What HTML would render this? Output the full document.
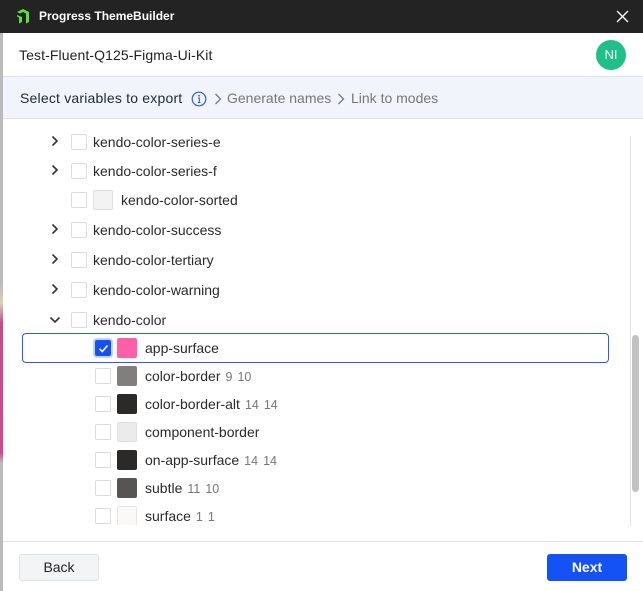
<!DOCTYPE html>
<html><head><meta charset="utf-8"><style>
*{box-sizing:border-box;margin:0;padding:0}
body{width:643px;height:591px;overflow:hidden;background:#fff;font-family:"Liberation Sans",Arial,sans-serif;position:relative;color:#222}
.edge{position:absolute;left:0;top:33px;width:3px;height:558px;background:linear-gradient(#bbb 0,#bbb 250px,#d9d0b8 270px,#c84b86 290px,#d04a8a 420px,#bbb 430px)}
.tb{position:absolute;left:0;top:0;width:643px;height:33px;background:#232323;color:#fff;font-size:12px;font-weight:bold}
.tb .t{position:absolute;left:39px;top:9px}
.hd{position:absolute;left:3px;top:33px;width:640px;height:43px;background:#fff}
.hd .t{position:absolute;left:16px;top:14px;font-size:14px;color:#222;letter-spacing:0.1px}
.av{position:absolute;left:593px;top:7px;width:30px;height:30px;border-radius:50%;background:#1fbf8a;color:#fff;font-size:13px;text-align:center;line-height:30px}
.st{position:absolute;left:3px;top:76px;width:640px;height:43px;background:#f1f4fb;border-top:1px solid #dde3ee;border-bottom:1px solid #dde3ee;font-size:14px}
.st span{position:absolute;top:13px}
.row{position:absolute;left:0;height:20px;font-size:14px;color:#2a2a2a}
.cb{position:absolute;width:16px;height:16px;border:1px solid #dcdcdc;border-radius:2px;background:#fff}
.sw{position:absolute;width:20px;height:20px;border-radius:2px}
.tx{position:absolute;top:2px;white-space:nowrap}
.n{color:#777;font-size:12.5px;margin-left:5px}
.chev{position:absolute;top:3px}
.sel{position:absolute;left:22px;top:333px;width:587px;height:30px;border:1px solid #2a5ce6;border-radius:4px}
.sb{position:absolute;left:630px;top:136px;width:13px;height:390px;background:#fff;border-left:1px solid #e5e5e5}
.th{position:absolute;left:632px;top:335px;width:7px;height:157px;background:#c1c1c1;border-radius:4px}
.ft{position:absolute;left:3px;top:541px;width:640px;height:50px;border-top:1px solid #e3e3e3}
.bk{position:absolute;left:19px;top:554px;width:80px;height:27px;background:#f2f4f5;border:1px solid #dde2e5;border-radius:3px;text-align:center;line-height:25px;font-size:14px}
.nx{position:absolute;left:547px;top:554px;width:80px;height:27px;background:#1452f5;border-radius:3px;color:#fff;text-align:center;line-height:27px;font-size:14px;font-weight:bold}
</style></head><body>
<div class="tb">
<svg style="position:absolute;left:14px;top:7px" width="18" height="18" viewBox="0 0 18 18"><path d="M3 5 L9 2 L15 5 L15 15 L12 16.5 L12 6.5 L9 5 L6 6.5Z M3 8 L8 10 L8 15 L5 16.5 L5 10.5 L3 9.5Z" fill="#5ce03a"/></svg>
<span class="t">Progress ThemeBuilder</span>
<svg style="position:absolute;left:616px;top:10px" width="13" height="13" viewBox="0 0 13 13"><path d="M1 1L12 12M12 1L1 12" stroke="#fff" stroke-width="1.4"/></svg>
</div>
<div class="edge"></div>
<div class="hd"><span class="t">Test-Fluent-Q125-Figma-Ui-Kit</span><div class="av">NI</div></div>
<div class="st">
<span style="left:17px;color:#1f2937;letter-spacing:0.2px">Select variables to export</span>
<svg style="position:absolute;left:188px;top:14px" width="16" height="16" viewBox="0 0 16 16"><circle cx="8" cy="8" r="6.8" fill="none" stroke="#2a5ce6" stroke-width="1.2"/><circle cx="8" cy="4.8" r="0.9" fill="#2a5ce6"/><path d="M7 7h1.3v4.5M6.8 11.5h2.6" stroke="#2a5ce6" stroke-width="1.1" fill="none"/></svg>
<svg style="position:absolute;left:211px;top:16px" width="8" height="12" viewBox="0 0 8 12"><path d="M1.5 1l5 5-5 5" stroke="#777" stroke-width="1.3" fill="none"/></svg>
<span style="left:224px;color:#777">Generate names</span>
<svg style="position:absolute;left:334px;top:16px" width="8" height="12" viewBox="0 0 8 12"><path d="M1.5 1l5 5-5 5" stroke="#777" stroke-width="1.3" fill="none"/></svg>
<span style="left:348px;color:#777">Link to modes</span>
</div>
<div class="sel"></div>
<div class="sb"></div><div class="th"></div>
<div class="ft"></div>
<div class="bk">Back</div><div class="nx">Next</div>
<div style="position:absolute;left:0;top:120px;width:630px;height:405px;overflow:hidden">
<div class="row" style="top:12px;width:600px"><svg class="chev" style="left:50px" width="10" height="12" viewBox="0 0 10 12"><path d="M2.5 1.5l4.5 4.5-4.5 4.5" stroke="#333" stroke-width="1.6" fill="none"/></svg><div class="cb" style="left:71px;top:2px"></div><span class="tx" style="left:93px">kendo-color-series-e</span></div>
<div class="row" style="top:41px;width:600px"><svg class="chev" style="left:50px" width="10" height="12" viewBox="0 0 10 12"><path d="M2.5 1.5l4.5 4.5-4.5 4.5" stroke="#333" stroke-width="1.6" fill="none"/></svg><div class="cb" style="left:71px;top:2px"></div><span class="tx" style="left:93px">kendo-color-series-f</span></div>
<div class="row" style="top:70px;width:600px"><div class="cb" style="left:71px;top:2px"></div><div class="sw" style="left:93px;top:0;background:#f3f3f3;border:1px solid #e0e0e0"></div><span class="tx" style="left:121px">kendo-color-sorted</span></div>
<div class="row" style="top:100px;width:600px"><svg class="chev" style="left:50px" width="10" height="12" viewBox="0 0 10 12"><path d="M2.5 1.5l4.5 4.5-4.5 4.5" stroke="#333" stroke-width="1.6" fill="none"/></svg><div class="cb" style="left:71px;top:2px"></div><span class="tx" style="left:93px">kendo-color-success</span></div>
<div class="row" style="top:130px;width:600px"><svg class="chev" style="left:50px" width="10" height="12" viewBox="0 0 10 12"><path d="M2.5 1.5l4.5 4.5-4.5 4.5" stroke="#333" stroke-width="1.6" fill="none"/></svg><div class="cb" style="left:71px;top:2px"></div><span class="tx" style="left:93px">kendo-color-tertiary</span></div>
<div class="row" style="top:160px;width:600px"><svg class="chev" style="left:50px" width="10" height="12" viewBox="0 0 10 12"><path d="M2.5 1.5l4.5 4.5-4.5 4.5" stroke="#333" stroke-width="1.6" fill="none"/></svg><div class="cb" style="left:71px;top:2px"></div><span class="tx" style="left:93px">kendo-color-warning</span></div>
<div class="row" style="top:190px;width:600px"><svg class="chev" style="left:49px;top:5px" width="12" height="10" viewBox="0 0 12 10"><path d="M1.5 2.5l4.5 4.5 4.5-4.5" stroke="#333" stroke-width="1.6" fill="none"/></svg><div class="cb" style="left:71px;top:2px"></div><span class="tx" style="left:93px">kendo-color</span></div>
<div class="row" style="top:218px;width:600px"><div class="cb" style="left:95px;top:2px;background:#1452f5;border-color:#1452f5;box-shadow:0 0 0 2px #c5d3fb"><svg style="position:absolute;left:2px;top:2px" width="11" height="11" viewBox="0 0 11 11"><path d="M1.5 5.8l2.8 2.7 5.2-6" stroke="#fff" stroke-width="1.6" fill="none"/></svg></div><div class="sw" style="left:117px;top:0;background:#ff5ea8"></div><span class="tx" style="left:145px">app-surface</span></div>
<div class="row" style="top:246px;width:600px"><div class="cb" style="left:95px;top:2px"></div><div class="sw" style="left:117px;top:0;background:#807f7e"></div><span class="tx" style="left:145px">color-border<span class="n">9</span><span class="n">10</span></span></div>
<div class="row" style="top:274px;width:600px"><div class="cb" style="left:95px;top:2px"></div><div class="sw" style="left:117px;top:0;background:#2b2a29"></div><span class="tx" style="left:145px">color-border-alt<span class="n">14</span><span class="n">14</span></span></div>
<div class="row" style="top:302px;width:600px"><div class="cb" style="left:95px;top:2px"></div><div class="sw" style="left:117px;top:0;background:#ebebeb;border:1px solid #e0e0e0"></div><span class="tx" style="left:145px">component-border</span></div>
<div class="row" style="top:330px;width:600px"><div class="cb" style="left:95px;top:2px"></div><div class="sw" style="left:117px;top:0;background:#2b2a29"></div><span class="tx" style="left:145px">on-app-surface<span class="n">14</span><span class="n">14</span></span></div>
<div class="row" style="top:358px;width:600px"><div class="cb" style="left:95px;top:2px"></div><div class="sw" style="left:117px;top:0;background:#575553"></div><span class="tx" style="left:145px">subtle<span class="n">11</span><span class="n">10</span></span></div>
<div class="row" style="top:386px;width:600px"><div class="cb" style="left:95px;top:2px"></div><div class="sw" style="left:117px;top:0;background:#faf9f8;border:1px solid #e6e6e6"></div><span class="tx" style="left:145px">surface<span class="n">1</span><span class="n">1</span></span></div>
</div>
</body></html>
